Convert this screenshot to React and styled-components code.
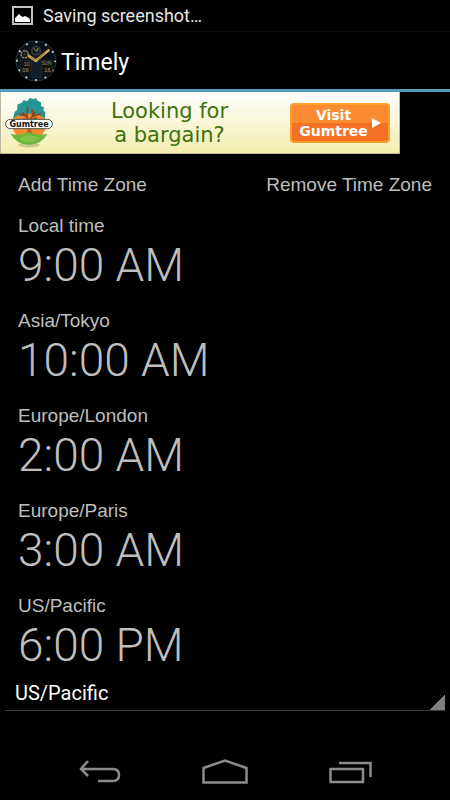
import React, { useState } from "react";
import styled, { createGlobalStyle } from "styled-components";

const ZONES = [
  { name: "Local time", time: "9:00 AM" },
  { name: "Asia/Tokyo", time: "10:00 AM" },
  { name: "Europe/London", time: "2:00 AM" },
  { name: "Europe/Paris", time: "3:00 AM" },
  { name: "US/Pacific", time: "6:00 PM" },
];

const PICKER_ZONES = ["US/Pacific", "Europe/Paris", "Europe/London", "Asia/Tokyo"];

const PictureIcon = () => (
  <svg width="21" height="19" viewBox="0 0 21 19" aria-hidden="true">
    <rect x="1" y="1" width="19" height="17" fill="none" stroke="#c4c4c4" strokeWidth="2" />
    <path d="M3 16V12L6 9L7 8L9 10L11 11L13 10L15 11L18 13V16Z" fill="#fff" />
  </svg>
);

const WatchIcon = () => (
  <svg width="42" height="42" viewBox="18 14 126 126" aria-hidden="true">
    <circle cx="81" cy="77" r="60" fill="#0a1016" stroke="#2a343c" strokeWidth="3" />
    <circle
      cx="81"
      cy="77"
      r="57"
      fill="none"
      stroke="#aebccb"
      strokeWidth="6"
      strokeDasharray="6 23.8"
      strokeDashoffset="3"
    />
    <path d="M68 68H96V126H68Z M58 52L69 66M104 48L95 66" fill="#101c28" stroke="#182838" strokeWidth="3" />
    <circle cx="81" cy="46" r="13" fill="#151a1c" stroke="#3a444b" strokeWidth="4" />
    <path d="M74 39L83 48L88 38" fill="none" stroke="#a79d4d" strokeWidth="3" />
    <circle cx="47" cy="57" r="11" fill="#10161b" stroke="#8b8160" strokeWidth="5" strokeDasharray="7 2" />
    <path d="M47 51V62M41 57H52" stroke="#37414a" strokeWidth="2" />
    <g fill="#16130e" stroke="#252c30" strokeWidth="2">
      <rect x="34" y="76" width="32" height="34" />
      <rect x="98" y="76" width="32" height="34" />
    </g>
    <g fill="#9a8e68" fontFamily="Liberation Sans, sans-serif" fontSize="17">
      <text x="44" y="91">10</text>
      <text x="40" y="109">08</text>
      <text x="98" y="90" fontSize="14">SUN</text>
      <text x="106" y="109">16</text>
    </g>
    <path d="M58 61L80 76L121 43" fill="none" stroke="#d5ac52" strokeWidth="8" />
    <path d="M66 65L80 75L108 52" fill="none" stroke="#5b4524" strokeWidth="2" />
    <circle cx="81" cy="76" r="5" fill="#c8a452" />
  </svg>
);

const TreeLogo = () => (
  <svg width="48" height="54" viewBox="0 0 144 162" role="img" aria-label="Gumtree">
    <ellipse cx="72" cy="147" rx="32" ry="7" fill="#c9c98d" />
    <circle cx="72" cy="83" r="51" fill="#f48a2b" />
    <path
      d="M25 67L29 47L36 43L38 25L50 21L56 12L67 16L75 5L85 10L92 6L99 15L108 19L108 30L117 34L115 43L121 49L120 67L102 57L86 60L72 51L51 62L40 57Z"
      fill="#269493"
    />
    <g fill="none" stroke="#8e431d" strokeWidth="5">
      <path d="M72 119V72L53 50M72 76L91 48M66 65L68 34M81 62L107 53M60 58L42 54M84 57L81 40" />
      <path d="M67 75L55 67M77 72L96 65" strokeWidth="4" />
    </g>
    <path d="M61 120L68 102V76H77V101L87 121Z" fill="#c35224" />
    <path d="M17 113Q44 121 70 107Q98 122 127 113Q112 144 72 146Q32 144 17 113Z" fill="#6eb43f" />
    <path d="M42 125Q72 112 103 125Q87 141 72 140Q54 140 42 125Z" fill="#83c34c" />
    <rect x="2" y="70" width="140" height="28" rx="14" fill="#fff" stroke="#48504a" strokeWidth="3" />
    <text
      x="72"
      y="92"
      textAnchor="middle"
      fontFamily="DejaVu Sans, sans-serif"
      fontWeight="bold"
      fontSize="24"
      fill="#111"
    >
      Gumtree
    </text>
  </svg>
);

const BackIcon = () => (
  <svg width="44" height="26" viewBox="0 0 44 26" fill="none" stroke="#8c8c8c" strokeWidth="2.5" aria-hidden="true">
    <path d="M10 2L3 10L10 17M3 10H35Q41 10 41 16Q41 22 35 22H20" />
  </svg>
);

const HomeIcon = () => (
  <svg width="48" height="26" viewBox="0 0 48 26" fill="none" stroke="#8c8c8c" strokeWidth="2.5" aria-hidden="true">
    <path d="M2.5 23.5V9L24 1.5L45.5 9V23.5Z" />
  </svg>
);

const RecentIcon = () => (
  <svg width="44" height="26" viewBox="0 0 44 26" fill="none" stroke="#8c8c8c" strokeWidth="2.5" aria-hidden="true">
    <rect x="2.5" y="10" width="32.5" height="13" />
    <path d="M11 4H42.5V18" />
  </svg>
);

const App = () => {
  const [zone, setZone] = useState("US/Pacific");

  return (
    <Root>
      <GlobalStyle />
      <StatusBar>
        <PictureIcon />
        Saving screenshot…
      </StatusBar>
      <ActionBar>
        <WatchIcon />
        <Title>Timely</Title>
      </ActionBar>
      <Main>
        <Banner>
          <TreeLogo />
          <Slogan>
            Looking for
            <br />a bargain?
          </Slogan>
          <VisitButton>
            <span>
              Visit
              <br />
              Gumtree
            </span>
            <svg width="9" height="10" viewBox="0 0 9 10" aria-hidden="true">
              <path d="M0 0L9 5L0 10Z" fill="#fff" />
            </svg>
          </VisitButton>
        </Banner>
        <Actions>
          <TextButton>Add Time Zone</TextButton>
          <TextButton>Remove Time Zone</TextButton>
        </Actions>
        <ZoneList>
          {ZONES.map((item) => (
            <li key={item.name}>
              <ZoneName>{item.name}</ZoneName>
              <ZoneTime>{item.time}</ZoneTime>
            </li>
          ))}
        </ZoneList>
        <Spinner aria-label="Time zone" value={zone} onChange={(e) => setZone(e.target.value)}>
          {PICKER_ZONES.map((name) => (
            <option key={name}>{name}</option>
          ))}
        </Spinner>
      </Main>
      <NavBar>
        <NavButton aria-label="Back">
          <BackIcon />
        </NavButton>
        <NavButton aria-label="Home">
          <HomeIcon />
        </NavButton>
        <NavButton aria-label="Recent apps">
          <RecentIcon />
        </NavButton>
      </NavBar>
    </Root>
  );
};

const GlobalStyle = createGlobalStyle`
  * {
    box-sizing: border-box;
  }
  body {
    margin: 0;
    background: #000;
  }
  button {
    border: none;
    padding: 0;
    background: none;
    font: inherit;
    color: inherit;
    cursor: pointer;
  }
`;

const Root = styled.div`
  min-height: 100vh;
  display: flex;
  flex-direction: column;
  background: #000;
  color: #fff;
  font-family: Roboto, sans-serif;
`;

const StatusBar = styled.div`
  height: 32px;
  padding: 0 12px;
  display: flex;
  align-items: center;
  gap: 10px;
  border-bottom: 1px solid #0c0c0c;
  font-size: 18px;
  color: #e6e6e6;
`;

const ActionBar = styled.header`
  height: 60px;
  padding: 0 15px;
  display: flex;
  align-items: center;
  gap: 4px;
  border-bottom: 3px solid #4c9cba;
`;

const Title = styled.h1`
  margin: 0;
  padding-top: 4px;
  font-size: 23px;
  font-weight: 400;
`;

const Main = styled.main`
  flex: 1;
  display: flex;
  flex-direction: column;
`;

const Banner = styled.section`
  width: 400px;
  max-width: 100%;
  height: 62px;
  padding: 0 9px 0 4px;
  display: flex;
  align-items: center;
  border: 1px solid #b9b79d;
  border-top: none;
  background: linear-gradient(#fff, #f3edb0);
`;

const Slogan = styled.p`
  flex: 1;
  margin: 0;
  padding-right: 4px;
  font-family: "DejaVu Sans", sans-serif;
  font-size: 21px;
  line-height: 24px;
  text-align: center;
  color: #3f720e;
`;

const VisitButton = styled.button`
  && {
    width: 100px;
    height: 40px;
    display: flex;
    align-items: center;
    justify-content: center;
    gap: 4px;
    border: 2px solid #fba02c;
    border-radius: 4px;
    background: linear-gradient(#fa8b30 50%, #f47024 50%);
    font-family: "DejaVu Sans", sans-serif;
    font-size: 14px;
    font-weight: bold;
    line-height: 16px;
    color: #fff;
  }
`;

const Actions = styled.div`
  padding: 20px 18px 0;
  display: flex;
  justify-content: space-between;
`;

const TextButton = styled.button`
  && {
    font-family: "Liberation Sans", sans-serif;
    font-size: 19px;
    line-height: 22px;
    color: #bebebe;
  }
`;

const ZoneList = styled.ul`
  margin: 0;
  padding: 19px 18px 0;
  display: grid;
  row-gap: 17px;
  list-style: none;
  color: #bebebe;
`;

const ZoneName = styled.div`
  font-family: "Liberation Sans", sans-serif;
  font-size: 19px;
  line-height: 22px;
`;

const ZoneTime = styled.div`
  font-size: 46px;
  font-weight: 300;
  line-height: 56px;
`;

const Spinner = styled.select`
  height: 36px;
  margin: 2px 5px 0;
  padding: 0 10px;
  appearance: none;
  border: none;
  border-bottom: 1px solid #3c3c3c;
  border-radius: 0;
  outline: none;
  background: linear-gradient(135deg, transparent 50%, #808080 50%) right bottom / 15px 15px no-repeat #000;
  font-family: Roboto, sans-serif;
  font-size: 20px;
  color: #fff;
`;

const NavBar = styled.nav`
  height: 56px;
  padding: 0 37px;
  display: grid;
  grid-template-columns: repeat(3, 1fr);
`;

const NavButton = styled.button`
  && {
    display: flex;
    align-items: center;
    justify-content: center;
  }
`;

export default App;
